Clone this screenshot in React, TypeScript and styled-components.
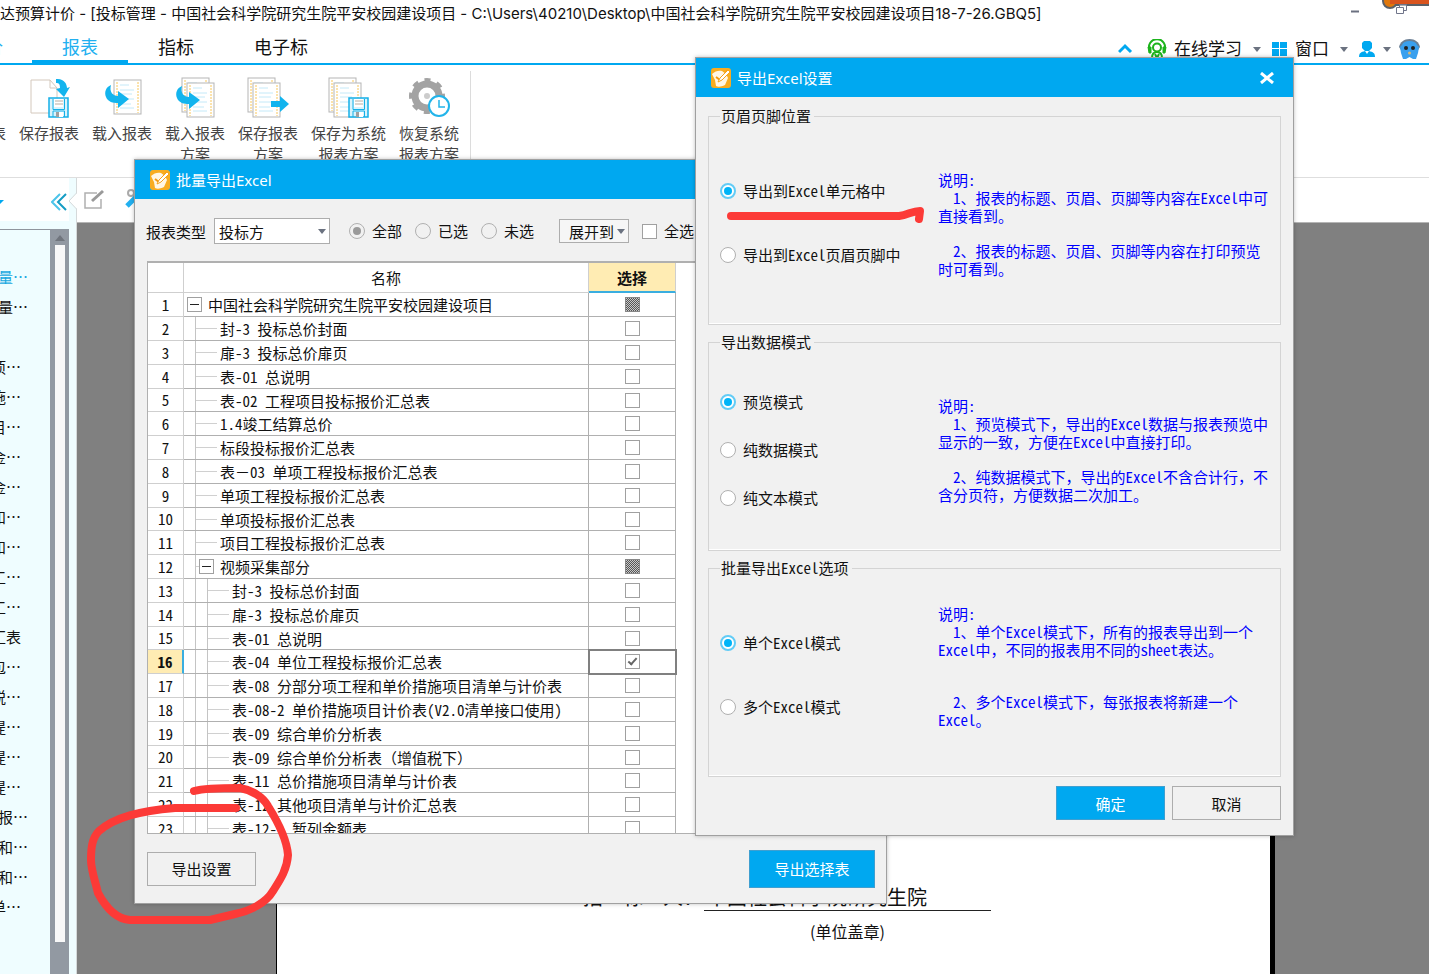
import React from "react";
import styled, { createGlobalStyle, css } from "styled-components";

const sans = `"Noto Sans", "Noto Sans CJK SC", sans-serif`;
const song = `"Noto Sans Mono CJK SC", "Noto Sans CJK SC", sans-serif`;
const blue = "#00a8f0";
const red = "#fc3a37";

const GlobalStyle = createGlobalStyle`
  *, *::before, *::after { box-sizing: border-box; }
  body { margin: 0; background: #fff; color: #111; font-family: ${sans}; font-size: 15px; overflow: hidden; }
  button, select, input { font: inherit; color: inherit; margin: 0; }
`;

/* ---------- shell ---------- */
const Desktop = styled.div`
  position: relative;
  display: flex;
  flex-direction: column;
  height: 100vh;
  overflow: hidden;
`;
const TitleBar = styled.header`
  display: flex;
  justify-content: space-between;
  height: 28px;
  line-height: 28px;
  white-space: nowrap;
`;
const Caption = styled.div`
  font-family: Inter, "Noto Sans CJK SC", sans-serif;
`;
const TabBar = styled.nav`
  display: flex;
  justify-content: space-between;
  height: 37px;
  border-bottom: 2px solid ${blue};
`;
const Tabs = styled.div`
  display: flex;
  font-size: 18px;
`;
const Tab = styled.a<{ $active?: boolean }>`
  padding: 0 30px;
  line-height: 38px;
  color: ${(p) => (p.$active ? "#22b0f0" : "#111")};
  border-bottom: 3px solid ${(p) => (p.$active ? blue : "transparent")};
  text-decoration: none;
  white-space: nowrap;
`;
const CutTab = styled.a`
  display: flex;
  justify-content: flex-end;
  width: 3px;
  margin-right: 29px;
  overflow: hidden;
  line-height: 38px;
  color: #22b0f0;
  text-decoration: none;
`;
const Tools = styled.div`
  display: flex;
  align-items: center;
  gap: 8px;
  padding: 7px 9px 0 0;
  font-size: 17px;
  white-space: nowrap;
`;
const ToolButton = styled.button`
  display: flex;
  align-items: center;
  gap: 7px;
  padding: 0;
  border: 0;
  background: none;
  line-height: 24px;
`;
const Caret = styled.span<{ $tight?: boolean }>`
  border: 4px solid transparent;
  border-top: 5px solid #6b7280;
  border-bottom: 0;
  margin: 0 ${(p) => (p.$tight ? 0 : 3)}px;
`;
const Ribbon = styled.div`
  display: flex;
  height: 113px;
  border-bottom: 1px solid #dedede;
`;
const RibbonGroup = styled.div`
  display: flex;
  gap: 13px;
  margin-top: 6px;
  padding: 7px 11px 0 0;
  border-right: 1px solid #dcdcdc;
`;
const RibbonItem = styled.button`
  display: flex;
  flex-direction: column;
  align-items: center;
  gap: 5px;
  padding: 0;
  border: 0;
  background: none;
  color: #444;
  line-height: 21px;
  white-space: pre;
`;
const CutItem = styled.div`
  display: flex;
  justify-content: flex-end;
  width: 6px;
  overflow: hidden;
  padding-top: 45px;
  line-height: 21px;
  color: #444;
`;
const Workspace = styled.div`
  display: flex;
  flex: 1;
  min-height: 0;
`;

/* ---------- left tree ---------- */
const Sidebar = styled.aside`
  display: flex;
  flex-direction: column;
  width: 77px;
  background: #effdff;
  border-right: 1px solid #d5d9da;
`;
const SideTop = styled.div`
  display: flex;
  margin-right: -1px;
`;
const SideHeader = styled.div`
  display: flex;
  align-items: center;
  justify-content: space-between;
  width: 69px;
  height: 43px;
  padding: 4px 2px 0 0;
  background: #fff;
`;
const SideBody = styled.div`
  display: flex;
  flex: 1;
  width: 69px;
  margin-top: 8px;
  min-height: 0;
`;
const SideList = styled.ul`
  flex: 1;
  margin: 0;
  padding: 32px 0 0;
  list-style: none;
  border-top: 1px solid #8f959d;
  font-family: "Noto Sans CJK SC", sans-serif;
  overflow: hidden;
`;
const SideItem = styled.li<{ $wide?: boolean; $current?: boolean }>`
  display: flex;
  justify-content: flex-end;
  width: ${(p) => (p.$wide ? 28 : 21)}px;
  height: 30px;
  line-height: 30px;
  overflow: hidden;
  white-space: nowrap;
  color: ${(p) => (p.$current ? "#18a8e0" : "#111")};
`;
const ScrollTrack = styled.div`
  display: flex;
  flex-direction: column;
  align-items: center;
  width: 19px;
  padding-bottom: 32px;
  background: #9299a2;
`;
const ScrollUp = styled.span`
  margin: 6px 0 4px;
  border: 5px solid transparent;
  border-top: 0;
  border-bottom: 6px solid #70757d;
`;
const ScrollThumb = styled.div`
  flex: 1;
  width: 10px;
  background: #f8f8f8;
`;

/* ---------- document ---------- */
const DocArea = styled.main`
  display: flex;
  flex-direction: column;
  flex: 1;
  min-width: 0;
`;
const DocToolbar = styled.div`
  display: flex;
  gap: 18px;
  height: 45px;
  padding: 10px 0 0 6px;
  border-bottom: 1px solid #b5b5b5;
`;
const Canvas = styled.div`
  display: flex;
  flex: 1;
  min-height: 0;
  padding: 0 154px 0 199px;
  background: #808080;
`;
const Paper = styled.div`
  flex: 1;
  padding: 660px 0 0 306px;
  background: #fff;
  border-left: 1px solid #000;
  border-right: 5px solid #000;
  font-family: "Noto Sans CJK SC", sans-serif;
`;
const Bidder = styled.div`
  display: flex;
  font-size: 20px;
  line-height: 27px;
  white-space: pre;
`;
const BidderLabel = styled.span`
  width: 121px;
`;
const BidderName = styled.span`
  width: 287px;
  padding-left: 3px;
  border-bottom: 1px solid #222;
`;
const SealNote = styled.div`
  width: 287px;
  margin: 8px 0 0 121px;
  text-align: center;
  font-size: 16px;
  line-height: 24px;
`;

/* ---------- dialogs ---------- */
const Dialog = styled.section<{ $x: number; $y: number; $w: number }>`
  position: absolute;
  left: ${(p) => p.$x}px;
  top: ${(p) => p.$y}px;
  width: ${(p) => p.$w}px;
  background: #f1f1f1;
  border: 1px solid #a0a0a0;
  box-shadow: 0 0 4px rgba(0, 0, 0, 0.25);
  font-family: ${song};
`;
const DialogTitle = styled.header`
  display: flex;
  align-items: center;
  gap: 6px;
  height: 39px;
  padding: 0 18px 0 15px;
  background: ${blue};
  color: #fff;
  font-family: ${sans};
`;
const CloseButton = styled.button`
  display: flex;
  margin-left: auto;
  padding: 0;
  border: 0;
  background: none;
`;
const ActionButton = styled.button<{ $primary?: boolean; $large?: boolean }>`
  width: ${(p) => (p.$large ? 126 : 109)}px;
  height: ${(p) => (p.$large ? 38 : 34)}px;
  padding: 0;
  border: 1px solid ${(p) => (p.$primary ? "#3f9fd0" : "#adadad")};
  background: ${(p) => (p.$primary ? blue : "#f1f1f1")};
  color: ${(p) => (p.$primary ? "#fff" : "#111")};
`;
const Filters = styled.div`
  display: flex;
  align-items: center;
  height: 26px;
  margin: 19px 0 17px 11px;
  white-space: nowrap;
`;
const TypeSelect = styled.div`
  display: flex;
  align-items: center;
  margin: 0 19px 0 8px;
  width: 116px;
  height: 26px;
  background: #fff;
  border: 1px solid #adadad;
  select {
    flex: 1;
    height: 24px;
    padding: 0 4px;
    border: 0;
    background: none;
    appearance: none;
    outline: none;
  }
`;
const ExpandButton = styled.button`
  display: flex;
  align-items: center;
  height: 24px;
  margin: 0 13px 0 25px;
  padding: 0 0 0 9px;
  border: 1px solid #adadad;
  background: #f6f6f6;
`;
const Choice = styled.label<{ $gap?: number }>`
  display: flex;
  align-items: center;
  gap: 7px;
  height: 20px;
  line-height: 20px;
  margin-right: ${(p) => p.$gap ?? 0}px;
`;
const Radio = styled.input.attrs({ type: "radio" })<{ $muted?: boolean }>`
  appearance: none;
  flex: none;
  display: grid;
  place-items: center;
  width: 16px;
  height: 16px;
  border: 1px solid #b0b0b0;
  border-radius: 50%;
  background: ${(p) => (p.$muted ? "#f1f1f1" : "#fff")};
  &:checked::after {
    content: "";
    width: 8px;
    height: 8px;
    border-radius: 50%;
    background: ${(p) => (p.$muted ? "#9a9a9a" : "#00b4f8")};
  }
  ${(p) => !p.$muted && css`&:checked { border: 2px solid #62ccf6; }`}
`;
const Check = styled.input.attrs({ type: "checkbox" })<{ $partial?: boolean }>`
  appearance: none;
  flex: none;
  display: grid;
  place-items: center;
  width: 15px;
  height: 15px;
  border: 1px solid #a0a0a0;
  background: #fff;
  ${(p) =>
    p.$partial &&
    css`
      border-color: #888;
      background: repeating-conic-gradient(#555 0 25%, #c8c8c8 0 50%) 0 0 / 2px 2px;
    `}
  &:checked::after {
    content: "";
    width: 9px;
    height: 5px;
    margin-top: -3px;
    border: solid #666;
    border-width: 0 0 2px 2px;
    transform: rotate(-48deg);
  }
`;
const GridBox = styled.div`
  height: 573px;
  margin: 0 11px 0 12px;
  overflow: hidden;
  background: #fff;
  border: 1px solid #b0b0b0;
  border-top: 2px solid #b0b0b0;
`;
const Grid = styled.table`
  border-collapse: separate;
  border-spacing: 0;
  table-layout: fixed;
  width: 528px;
  th,
  td {
    padding: 0;
    text-align: center;
    font-weight: 400;
    border-right: 1px solid #b0b0b0;
    border-bottom: 1px solid #b0b0b0;
  }
  thead th {
    height: 30px;
    border-color: #cfcfcf;
  }
`;
const Row = styled.tr`
  --row: 24px;
  &:nth-child(5n) {
    --row: 23px;
  }
`;
const NumberCell = styled.th<{ $current?: boolean }>`
  && {
    height: var(--row);
    border-color: #cfcfcf;
    line-height: 16px;
    ${(p) =>
      p.$current &&
      css`
        background: #ffecb3;
        font-weight: 700;
        border-right: 2px solid #3aaee0;
      `}
  }
`;
const SelectHead = styled.th`
  && {
    background: #ffecb3;
    font-weight: 700;
    border-bottom: 2px solid #3aaee0;
  }
`;
const PickCell = styled.td<{ $focus?: boolean }>`
  && {
    ${(p) => p.$focus && "outline: 2px solid #808080; outline-offset: -1px;"}
  }
`;
const Center = styled.div`
  display: flex;
  align-items: center;
  justify-content: center;
  height: calc(var(--row) - 1px);
`;
const Branch = styled.div<{ $root?: boolean }>`
  display: flex;
  align-items: center;
  height: calc(var(--row) - 1px);
  padding-left: ${(p) => (p.$root ? 3 : 11)}px;
  white-space: pre;
`;
const Guide = styled.span<{ $w: number; $arm?: number }>`
  display: flex;
  align-items: center;
  align-self: stretch;
  width: ${(p) => p.$w}px;
  border-left: 1px solid #c4c4c4;
  &::before {
    content: "";
    width: ${(p) => p.$arm ?? 0}px;
    border-top: 1px solid #d0d0d0;
  }
`;
const Toggle = styled.button`
  display: grid;
  place-items: center;
  width: 15px;
  height: 15px;
  margin-right: 6px;
  padding: 0;
  border: 1px solid #a0a0a0;
  background: #fff;
  &::before {
    content: "";
    width: 9px;
    height: 1px;
    background: #222;
  }
`;
const GridFooter = styled.footer`
  display: flex;
  align-items: center;
  justify-content: space-between;
  height: 69px;
  padding: 0 11px 0 12px;
`;

const Settings = styled.form`
  display: flex;
  flex-direction: column;
  gap: 7px;
  padding: 9px 12px 15px;
`;
const Group = styled.fieldset`
  height: 219px;
  margin: 0;
  padding: 0 4px 0 11px;
  border: 1px solid #d4d4d4;
  box-shadow: inset 0 -1px 0 #fff;
`;
const Legend = styled.legend`
  padding: 0 3px 0 1px;
  line-height: 20px;
`;
const GroupBody = styled.div`
  display: grid;
  grid-template-columns: 218px 1fr;
  align-items: start;
`;
const Choices = styled.div<{ $top: number; $gap: number }>`
  display: flex;
  flex-direction: column;
  gap: ${(p) => p.$gap}px;
  padding-top: ${(p) => p.$top}px;
`;
const Notes = styled.div<{ $top: number; $gap: number }>`
  display: flex;
  flex-direction: column;
  gap: ${(p) => p.$gap}px;
  padding-top: ${(p) => p.$top}px;
  color: #0000ff;
  line-height: 18px;
  white-space: pre;
`;
const Note = styled.p`
  margin: 0;
`;
const Buttons = styled.div`
  display: flex;
  justify-content: flex-end;
  gap: 7px;
  margin-top: 2px;
`;
const Ink = styled.svg`
  position: absolute;
  inset: 0;
  width: 100%;
  height: 100%;
  pointer-events: none;
  fill: none;
  stroke: ${red};
  stroke-width: 8;
  stroke-linecap: round;
  stroke-linejoin: round;
`;

/* ---------- icons ---------- */
const Sheet = ({ x, y }: { x: number; y: number }) => (
  <g>
    <rect x={x} y={y} width="27" height="34" fill="#fff" stroke="#b5b5b5" />
    <path d={`M${x + 3} ${y + 2}v31M${x + 24} ${y + 2}v31`} stroke="#f7c65a" strokeDasharray="2 1" />
    <path
      d={`M${x + 6} ${y + 5}h9M${x + 6} ${y + 10}h14M${x + 6} ${y + 14}h12M${x + 6} ${y + 19}h14M${x + 6} ${y + 24}h11M${x + 6} ${y + 28}h14`}
      stroke="#c4e9f8"
    />
  </g>
);
const Floppy = ({ x, y }: { x: number; y: number }) => (
  <g transform={`translate(${x} ${y})`}>
    <path d="M1 1h19v19H1z" fill="#d8f3fc" stroke="#14b0e8" strokeWidth="1.500" />
    <path d="M6 2h9v8H6z" fill="#fff" />
    <path d="M7 4h8M7 7h8" stroke="#b8aca0" />
    <path d="M5 2v10.500h11.500V2M5 20v-6h11.500v6" fill="none" stroke="#14b0e8" />
    <path d="M8 15h7v5H8z" fill="#fff" />
    <path d="M8 15h3v5H8z" fill="#a0a0a0" />
  </g>
);
const Swoop = ({ x, y }: { x: number; y: number }) => (
  <path
    transform={`translate(${x} ${y})`}
    d="M6 0C1 2-1 7 1 12s7 6 12 6v5l11-9-11-8v5C8 11 4 7 6 0z"
    fill="#12b4ee"
  />
);
const ribbonIcons: Record<string, React.ReactNode> = {
  save: (
    <>
      <path d="M2 1h19l7 8v25H2z" fill="#fff" stroke="#d4c8bc" />
      <path d="M21 1v8h7" fill="none" stroke="#d4c8bc" />
      <path d="M27 0c8-1 11 5 11 9l3-1-6 10-8-8 4-1c0-4-1-5-4-5z" fill="#12b4ee" />
      <Floppy x={19} y={18} />
    </>
  ),
  load: (
    <>
      <Sheet x={12} y={1} />
      <Swoop x={3} y={6} />
    </>
  ),
  loadPlan: (
    <>
      <Sheet x={7} y={-1} />
      <Sheet x={12} y={4} />
      <Swoop x={1} y={7} />
    </>
  ),
  savePlan: (
    <>
      <Sheet x={0} y={-1} />
      <Sheet x={5} y={4} />
      <path d="M23 22h9v-5l9 8-9 8v-5h-9z" fill="#12b4ee" />
    </>
  ),
  saveSystem: (
    <>
      <Sheet x={0} y={-1} />
      <Sheet x={5} y={4} />
      <Floppy x={19} y={18} />
    </>
  ),
  restore: (
    <>
      <circle cx="18" cy="17" r="12" fill="none" stroke="#a3a3a3" strokeWidth="7" />
      <circle
        cx="18"
        cy="17"
        r="16"
        fill="none"
        stroke="#a3a3a3"
        strokeWidth="4"
        strokeDasharray="6 6.566"
        strokeDashoffset="3"
      />
      <circle cx="18" cy="17" r="3" fill="#ccc" />
      <circle cx="30" cy="27" r="10" fill="#fff" stroke="#22b4ea" strokeWidth="2" />
      <path d="M30 21v7h6" fill="none" stroke="#22b4ea" strokeWidth="1.500" />
    </>
  ),
};
const RibbonIcon = ({ name }: { name: string }) => (
  <svg width="42" height="40" viewBox="-1 -1 42 40" overflow="visible">
    {ribbonIcons[name]}
  </svg>
);
const AppIcon = () => (
  <svg width="20" height="20" viewBox="0 0 20 20">
    <rect width="20" height="20" rx="3" fill="#f8ac20" />
    <path d="M1 6C4 3 8 2 11 3l4 3 2 4-3 7c-4 2-7 2-9 1L4 12z" fill="#fff6e4" />
    <path d="M5 9l4 3 8-10" fill="none" stroke="#f39a12" strokeWidth="2" strokeLinejoin="round" />
    <path d="M17 2l2 2-8 8-4 2 2-4z" fill="#fff" stroke="#f5a21a" />
  </svg>
);

/* ---------- data ---------- */
const ribbon: [string, string][] = [
  ["save", "保存报表"],
  ["load", "载入报表"],
  ["loadPlan", "载入报表\n方案"],
  ["savePlan", "保存报表\n方案"],
  ["saveSystem", "保存为系统\n报表方案"],
  ["restore", "恢复系统\n报表方案"],
];
const sideItems = [
  "量…", "量…", "", "项…", "施…", "目…", "金…", "金…", "和…", "和…", "工…", "工…",
  "汇表", "包…", "税…", "提…", "提…", "提…", "报…", "和…", "和…", "单…",
];
const wideItems = [0, 1, 18, 19, 20];

type Line = { text: string; depth: 0 | 1 | 2; parent?: boolean; checked?: boolean };
const leaf = (depth: 1 | 2, text: string, checked = false): Line => ({ text, depth, checked });
const lines: Line[] = [
  { text: "中国社会科学院研究生院平安校园建设项目", depth: 0, parent: true },
  leaf(1, "封-3 投标总价封面"),
  leaf(1, "扉-3 投标总价扉页"),
  leaf(1, "表-01 总说明"),
  leaf(1, "表-02 工程项目投标报价汇总表"),
  leaf(1, "1.4竣工结算总价"),
  leaf(1, "标段投标报价汇总表"),
  leaf(1, "表－03 单项工程投标报价汇总表"),
  leaf(1, "单项工程投标报价汇总表"),
  leaf(1, "单项投标报价汇总表"),
  leaf(1, "项目工程投标报价汇总表"),
  { text: "视频采集部分", depth: 1, parent: true },
  leaf(2, "封-3 投标总价封面"),
  leaf(2, "扉-3 投标总价扉页"),
  leaf(2, "表-01 总说明"),
  leaf(2, "表-04 单位工程投标报价汇总表", true),
  leaf(2, "表-08 分部分项工程和单价措施项目清单与计价表"),
  leaf(2, "表-08-2 单价措施项目计价表(V2.0清单接口使用)"),
  leaf(2, "表-09 综合单价分析表"),
  leaf(2, "表-09 综合单价分析表（增值税下）"),
  leaf(2, "表-11 总价措施项目清单与计价表"),
  leaf(2, "表-12 其他项目清单与计价汇总表"),
  leaf(2, "表-12-1 暂列金额表"),
];

const groups = [
  {
    name: "place",
    title: "页眉页脚位置",
    top: 55,
    gap: 44,
    options: ["导出到Excel单元格中", "导出到Excel页眉页脚中"],
    noteTop: 45,
    noteGap: 17,
    notes: [
      "说明:\n  1、报表的标题、页眉、页脚等内容在Excel中可\n直接看到。",
      "  2、报表的标题、页眉、页脚等内容在打印预览\n时可看到。",
    ],
  },
  {
    name: "mode",
    title: "导出数据模式",
    top: 40,
    gap: 28,
    options: ["预览模式", "纯数据模式", "纯文本模式"],
    noteTop: 45,
    noteGap: 17,
    notes: [
      "说明:\n  1、预览模式下，导出的Excel数据与报表预览中\n显示的一致，方便在Excel中直接打印。",
      "  2、纯数据模式下，导出的Excel不含合计行，不\n含分页符，方便数据二次加工。",
    ],
  },
  {
    name: "batch",
    title: "批量导出Excel选项",
    top: 55,
    gap: 44,
    options: ["单个Excel模式", "多个Excel模式"],
    noteTop: 27,
    noteGap: 34,
    notes: [
      "说明:\n  1、单个Excel模式下，所有的报表导出到一个\nExcel中，不同的报表用不同的sheet表达。",
      "  2、多个Excel模式下，每张报表将新建一个\nExcel。",
    ],
  },
];

const ExportDialog = () => (
  <Dialog $x={134} $y={159} $w={753} aria-label="批量导出Excel">
    <DialogTitle>
      <AppIcon />
      批量导出Excel
    </DialogTitle>
    <Filters>
      <label htmlFor="type">报表类型</label>
      <TypeSelect>
        <select id="type">
          <option>投标方</option>
        </select>
        <Caret />
      </TypeSelect>
      <Choice $gap={13}>
        <Radio $muted name="scope" defaultChecked />
        全部
      </Choice>
      <Choice $gap={13}>
        <Radio $muted name="scope" />
        已选
      </Choice>
      <Choice>
        <Radio $muted name="scope" />
        未选
      </Choice>
      <ExpandButton type="button">
        展开到
        <Caret />
      </ExpandButton>
      <Choice>
        <Check />
        全选
      </Choice>
    </Filters>
    <GridBox>
      <Grid>
        <colgroup>
          <col width="36" />
          <col width="405" />
          <col width="87" />
        </colgroup>
        <thead>
          <tr>
            <th />
            <th>名称</th>
            <SelectHead>选择</SelectHead>
          </tr>
        </thead>
        <tbody>
          {lines.map((line, i) => (
            <Row key={i}>
              <NumberCell scope="row" $current={line.checked}>
                {i + 1}
              </NumberCell>
              <td>
                <Branch $root={line.depth === 0}>
                  {line.depth === 2 && <Guide $w={12} />}
                  {line.depth > 0 && <Guide $w={line.parent ? 4 : 25} $arm={line.parent ? 3 : 21} />}
                  {line.parent && <Toggle type="button" aria-label="折叠" />}
                  {line.text}
                </Branch>
              </td>
              <PickCell $focus={line.checked}>
                <Center>
                  <Check $partial={line.parent} defaultChecked={line.checked} aria-label={line.text} />
                </Center>
              </PickCell>
            </Row>
          ))}
        </tbody>
      </Grid>
    </GridBox>
    <GridFooter>
      <ActionButton type="button">导出设置</ActionButton>
      <ActionButton type="button" $primary $large>
        导出选择表
      </ActionButton>
    </GridFooter>
  </Dialog>
);

const SettingsDialog = () => (
  <Dialog $x={695} $y={57} $w={599} aria-label="导出Excel设置">
    <DialogTitle>
      <AppIcon />
      导出Excel设置
      <CloseButton type="button" aria-label="关闭">
        <svg width="16" height="12" viewBox="0 0 16 12">
          <path d="M2 1l12 10M14 1L2 11" stroke="#fff" strokeWidth="3" />
        </svg>
      </CloseButton>
    </DialogTitle>
    <Settings>
      {groups.map((g) => (
        <Group key={g.name}>
          <Legend>{g.title}</Legend>
          <GroupBody>
            <Choices $top={g.top} $gap={g.gap}>
              {g.options.map((o, i) => (
                <Choice key={o}>
                  <Radio name={g.name} defaultChecked={i === 0} />
                  {o}
                </Choice>
              ))}
            </Choices>
            <Notes $top={g.noteTop} $gap={g.noteGap}>
              {g.notes.map((n) => (
                <Note key={n}>{n}</Note>
              ))}
            </Notes>
          </GroupBody>
        </Group>
      ))}
      <Buttons>
        <ActionButton type="button" $primary>
          确定
        </ActionButton>
        <ActionButton type="button">取消</ActionButton>
      </Buttons>
    </Settings>
  </Dialog>
);

export default function App() {
  return (
    <Desktop>
      <GlobalStyle />
      <TitleBar>
        <Caption>
          达预算计价 - [投标管理 - 中国社会科学院研究生院平安校园建设项目 -
          C:\Users\40210\Desktop\中国社会科学院研究生院平安校园建设项目18-7-26.GBQ5]
        </Caption>
        <svg width="80" height="20" viewBox="1349 0 80 20">
          <path d="M1351 11.500h8" stroke="#6b7080" strokeWidth="2" />
          <path d="M1389 1h40" stroke="#5b6068" strokeWidth="10" />
          <circle cx="1390" cy="1" r="7" fill="#e0780c" stroke="#5b6068" strokeWidth="2" />
          <path d="M1390 1h39" stroke="#d9541e" strokeWidth="6" />
          <path
            d="M1399.500 7.500v-3h7v6h-3M1396.500 7.500h7v6h-7z"
            fill="#fff"
            fillOpacity=".5"
            stroke="#70758a"
          />
        </svg>
      </TitleBar>
      <TabBar>
        <Tabs>
          <CutTab href="#price">价</CutTab>
          <Tab href="#report" $active>
            报表
          </Tab>
          <Tab href="#index">指标</Tab>
          <Tab href="#bid">电子标</Tab>
        </Tabs>
        <Tools>
          <ToolButton aria-label="收起">
            <svg width="21" height="20" viewBox="0 0 21 20">
              <path d="M1 13l6-6 6 6" fill="none" stroke={blue} strokeWidth="3" />
            </svg>
          </ToolButton>
          <ToolButton>
            <svg width="20" height="20" viewBox="0 0 20 20" fill="none" stroke="#1cb41c">
              <path d="M3 12A8 8 0 1 1 17 12" strokeWidth="2" />
              <path d="M1 8h3v6H2zM19 8h-3v6h2z" fill="#1cb41c" />
              <circle cx="10" cy="8.500" r="4" strokeWidth="2" />
              <path d="M5 19c0-4 2-6 5-6s5 2 5 6M8 15l2 4 2-4" strokeWidth="2" />
            </svg>
            在线学习
          </ToolButton>
          <Caret />
          <ToolButton>
            <svg width="16" height="16" viewBox="0 0 16 16" fill={blue}>
              <path d="M0 1h7v6H0zM8 1h7v6H8zM0 8h7v7H0zM8 8h7v7H8z" />
            </svg>
            窗口
          </ToolButton>
          <Caret />
          <ToolButton aria-label="用户">
            <svg width="16" height="16" viewBox="0 0 16 16" fill={blue}>
              <path d="M5 0h6l2 2v5l-3 3H6L3 7V2zM0 16c0-4 2-5 6-6l2 3 2-3c4 1 6 2 6 6z" />
            </svg>
          </ToolButton>
          <Caret $tight />
          <ToolButton aria-label="助手">
            <svg width="21" height="20" viewBox="0 0 21 20">
              <path d="M0 8C1 3 5 0 10.500 0S20 3 21 8l-2 3H2z" fill="#6b7f94" />
              <path d="M3 6c1-3 4-4 7.500-4S17 3 18 6l2 2-1 6-2 6h-3l-3.500-2L7 20H4l-2-6-1-6z" fill="#3aa0ee" />
              <circle cx="7" cy="9" r="2" fill="#222" />
              <circle cx="14" cy="9" r="2" fill="#222" />
              <circle cx="10.500" cy="14" r="1.500" fill="#d8b878" />
            </svg>
          </ToolButton>
        </Tools>
      </TabBar>
      <Ribbon>
        <RibbonGroup>
          <CutItem>表</CutItem>
          {ribbon.map(([icon, label], i) => (
            <RibbonItem key={i}>
              <RibbonIcon name={icon} />
              <span>{label}</span>
            </RibbonItem>
          ))}
        </RibbonGroup>
      </Ribbon>
      <Workspace>
        <Sidebar>
          <SideTop>
            <SideHeader>
              <svg width="4" height="6" viewBox="0 0 4 6">
                <path d="M-4 1h8l-4 4z" fill={blue} />
              </svg>
              <svg width="16" height="18" viewBox="0 0 16 18" fill="none" strokeWidth="2">
                <path d="M9 1L1 9l8 8" stroke="#4cc4ea" />
                <path d="M15 1L7 9l8 8" stroke="#149cc4" />
              </svg>
            </SideHeader>
            <svg width="8" height="43" viewBox="0 0 8 43">
              <path d="M8 15L0 23l8 8z" fill="#fff" />
              <path d="M7.500 15L0 23l7.500 8" fill="none" stroke="#d5d9da" />
            </svg>
          </SideTop>
          <SideBody>
            <SideList>
              {sideItems.map((t, i) => (
                <SideItem key={i} $current={i === 0} $wide={wideItems.includes(i)}>
                  {t}
                </SideItem>
              ))}
            </SideList>
            <ScrollTrack>
              <ScrollUp />
              <ScrollThumb />
            </ScrollTrack>
          </SideBody>
        </Sidebar>
        <DocArea>
          <DocToolbar>
            <svg width="22" height="22" viewBox="0 0 22 22" fill="none" stroke="#b0b0b0" strokeWidth="1.500">
              <path d="M14 5H2v15h16V11" />
              <path d="M9 13L20 3" stroke="#999" strokeWidth="3" />
            </svg>
            <svg width="22" height="22" viewBox="0 0 22 22" fill="none" strokeWidth="2">
              <circle cx="8" cy="5" r="3" stroke="#aaa" />
              <path d="M4 18L17 5" stroke="#22b0f0" strokeWidth="5" />
            </svg>
          </DocToolbar>
          <Canvas>
            <Paper>
              <Bidder>
                <BidderLabel>招　标　人：</BidderLabel>
                <BidderName>中国社会科学院研究生院</BidderName>
              </Bidder>
              <SealNote>(单位盖章)</SealNote>
            </Paper>
          </Canvas>
        </DocArea>
      </Workspace>
      <ExportDialog />
      <SettingsDialog />
      <Ink aria-hidden="true">
        <path d="M194 791C205 788 225 788 240 788C252 790 263 797 268 806C278 822 287 840 288 855C287 870 280 880 273 891C266 903 250 911 235 914L210 920H130C115 919 105 906 98 893C95 880 91 870 91 860C91 848 92 838 99 831C115 817 140 811 175 808H236" />
        <path d="M731 216H899C908 215 912 211 920 211L919 219" />
      </Ink>
    </Desktop>
  );
}
